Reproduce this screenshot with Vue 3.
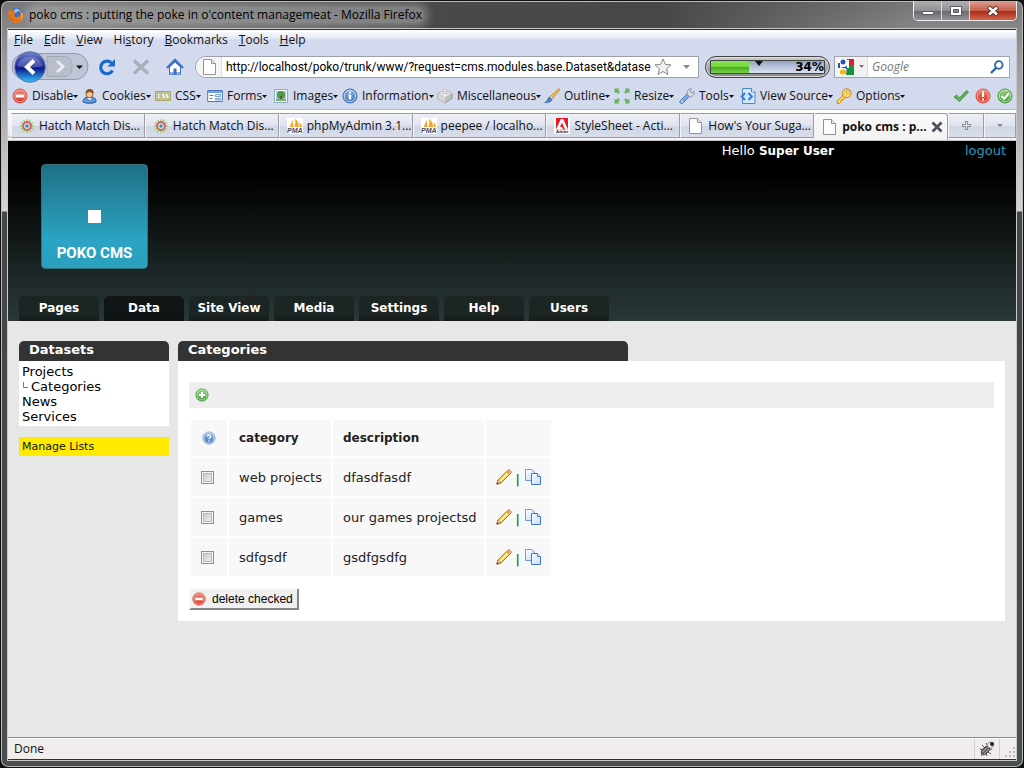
<script setup>
import { ref } from 'vue'

const menus = [['', 'F', 'ile'], ['', 'E', 'dit'], ['', 'V', 'iew'], ['Hi', 's', 'tory'], ['', 'B', 'ookmarks'], ['', 'T', 'ools'], ['', 'H', 'elp']]
const tools = [
  ['disable', 'Disable'], ['user', 'Cookies'], ['css', 'CSS'], ['form', 'Forms'], ['image', 'Images'], ['info', 'Information'],
  ['brick', 'Miscellaneous'], ['brush', 'Outline'], ['resize', 'Resize'], ['wrench', 'Tools'], ['source', 'View Source'], ['key', 'Options'],
]
const tabs = [
  ['flower', 'Hatch Match Dis...'], ['flower', 'Hatch Match Dis...'], ['pma', 'phpMyAdmin 3.1...'], ['pma', 'peepee / localho...'],
  ['adobe', 'StyleSheet - Acti...'], ['page', "How's Your Suga..."],
]
const sections = ['Pages', 'Data', 'Site View', 'Media', 'Settings', 'Help', 'Users']
const rows = ref([
  { category: 'web projects', description: 'dfasdfasdf', checked: false },
  { category: 'games', description: 'our games projectsd', checked: false },
  { category: 'sdfgsdf', description: 'gsdfgsdfg', checked: false },
])
const url = ref('http://localhost/poko/trunk/www/?request=cms.modules.base.Dataset&datase')
const query = ref('')
const petals = Array.from({ length: 12 }, (_, i) => i * 30)
</script>

<template>
  <svg class="defs" aria-hidden="true">
    <defs>
      <linearGradient id="gRed" x1="0" y1="0" x2="0" y2="1"><stop offset="0" stop-color="#f58a7b" /><stop offset="1" stop-color="#d9301f" /></linearGradient>
      <linearGradient id="gGreen" x1="0" y1="0" x2="0" y2="1"><stop offset="0" stop-color="#9bd38a" /><stop offset="1" stop-color="#3c9a35" /></linearGradient>
      <linearGradient id="gBlue" x1="0" y1="0" x2="0" y2="1"><stop offset="0" stop-color="#8db4e2" /><stop offset="1" stop-color="#3f74b8" /></linearGradient>
      <linearGradient id="gPaper" x1="0" y1="0" x2="1" y2="1"><stop offset="0" stop-color="#fff" /><stop offset="1" stop-color="#c3dcf8" /></linearGradient>
      <linearGradient id="gBack" x1="0" y1="0" x2="0" y2="1"><stop offset="0" stop-color="#7784c8" /><stop offset=".45" stop-color="#1d2d9d" /><stop offset=".55" stop-color="#0b1c8c" /><stop offset="1" stop-color="#35c5fb" /></linearGradient>
    </defs>
    <symbol id="i-firefox" viewBox="0 0 16 16"><circle cx="8.400" cy="7.600" r="6.900" fill="#3b6fc0" /><path d="M7 2c3-1 5 1 6 3l-3-1-2 2-2-1z" fill="#8cc8f0" /><path d="M1 2.500 3 4c1-1 2-1.500 3.500-1.600L5.500 4.500 8 6 6 7.500C6 10 9 11 11 9.500c2-1.500 1.800-4 .8-6C16 6 16.500 11 13 14c-4 3.500-11 2-12.500-3.500C0 7 .3 5 1 2.500z" fill="#e8741a" /><path d="M12.500 4C16 7 15 11.500 12 13.500c2-3 2.200-6 .5-9.500z" fill="#fbc13a" /><path d="M1 6c0 4 2 6.500 5 7.500C3 13.500.5 10 1 6z" fill="#a92f12" /></symbol>
    <symbol id="i-disable" viewBox="0 0 16 16"><circle cx="8" cy="8" r="7" fill="url(#gRed)" stroke="#d7544a" /><circle cx="8" cy="8" r="5.700" fill="none" stroke="#fbb4aa" stroke-width=".8" /><rect x="3.800" y="6.500" width="8.400" height="3" rx=".6" fill="#fff" /></symbol>
    <symbol id="i-user" viewBox="0 0 16 16"><path d="M1 14c0-4 3-5 7-5s6 1 6 5c-3 1.800-10 1.800-13 0z" fill="#5d96d8" stroke="#2c5e9e" /><path d="M5.500 10h4L8 12.500z" fill="#fff" /><ellipse cx="7.500" cy="5.800" rx="3.500" ry="4" fill="#f5c594" stroke="#9b6334" /><path d="M3.600 5.500C3 0 12.500-1 11.500 5.500 9.500 5 8 4 7.500 3.500 6.500 4.500 5 5 3.600 5.500z" fill="#8b4e20" /></symbol>
    <symbol id="i-css" viewBox="0 0 16 16"><path d="M.5 3.500h15v9H.5z" fill="#b9b984" stroke="#a5a56b" /><path d="M1.500 4.500h13v7h-13z" fill="none" stroke="#c9c99a" /><path d="M5.500 6.500H3.500v3h2M9.500 6.500h-2V8h2v1.500h-2M13 6.500h-2V8h2v1.500h-2" fill="none" stroke="#fff" /></symbol>
    <symbol id="i-form" viewBox="0 0 16 16"><path d="M.7 2.500h14.600v11H.7z" fill="#fff" stroke="#4c79ba" /><path d="M1 3h14v2H1z" fill="#6da0dd" /><path d="M2.500 7.500h4M2.500 10.500h3" stroke="#777" /><path d="M8.500 6.500h5v2h-5zM8.500 10.500h5v1.500h-5z" fill="#dfedfc" stroke="#79a5d8" /></symbol>
    <symbol id="i-image" viewBox="0 0 16 16"><path d="M1.500 1.500h13v13h-13z" fill="#fff" stroke="#8fa9bc" /><path d="M3 3h10v10H3z" fill="#a9cdeb" /><circle cx="8" cy="7" r="4" fill="#4a9c3e" /><path d="M7 8h2v4H7z" fill="#745338" /><path d="M3 11h10v2H3z" fill="#6fb45f" /></symbol>
    <symbol id="i-info" viewBox="0 0 16 16"><circle cx="8" cy="8" r="7" fill="url(#gBlue)" stroke="#376ca9" /><circle cx="8" cy="8" r="5.800" fill="none" stroke="#d5e5f7" stroke-width=".8" /><path d="M7 3.500h2v2H7zM6.500 6.500h2.700v5H6.800v-3h-.3z" fill="#fff" /></symbol>
    <symbol id="i-brick" viewBox="0 0 16 16"><path d="M.8 5.500 8 2l7.200 3.500v5L8 15 .8 11z" fill="#bcbcbc" stroke="#888" stroke-width=".7" /><path d="M.8 5.500 8 9l7.200-3.500L8 2z" fill="#ededed" /><path d="M.8 5.500 8 9v6L.8 11z" fill="#d5d5d5" /><g fill="#f4f4f4" stroke="#b0b0b0" stroke-width=".6"><path d="M6 2.500v2c1 1 3 1 4 0v-2" /><ellipse cx="8" cy="2.500" rx="2" ry="1" /><path d="M2.500 4.500v2c1 1 3 1 4 0v-2" /><ellipse cx="4.500" cy="4.500" rx="2" ry="1" /><path d="M9.500 4.500v2c1 1 3 1 4 0v-2" /><ellipse cx="11.500" cy="4.500" rx="2" ry="1" /></g></symbol>
    <symbol id="i-brush" viewBox="0 0 16 16"><path d="M7 8 14.500.8c1-.3 1.400.5 1 1.300L9 10z" fill="#f3bb4b" stroke="#b78023" stroke-width=".8" /><path d="m5.500 9 1.700-1.500L9.500 10 8 11.500z" fill="#ddd" stroke="#888" stroke-width=".6" /><path d="M.5 14.500C4 14 3 10 5.500 9L8 11.500c-1 3-5 3.500-7.500 3z" fill="#4c83c8" stroke="#315f9c" stroke-width=".6" /></symbol>
    <symbol id="i-resize" viewBox="0 0 16 16"><path d="M.5.500h5L4 2l2 2-2 2-2-2L.5 5.500zM15.500.500v5L14 4l-2 2-2-2 2-2L10.500.500zM.5 15.500v-5L2 12l2-2 2 2-2 2 1.500 1.500zM15.500 15.500h-5L12 14l-2-2 2-2 2 2 1.500-1.500z" fill="#63b35c" /></symbol>
    <symbol id="i-wrench" viewBox="0 0 16 16"><path d="m1 13 7-7 2.500 2.500-7 7c-1.500.7-3.500-1-2.500-2.500z" fill="#79a9e0" stroke="#3e70ae" stroke-width=".8" /><path d="M8 6C7.500 3 9.500.5 12.500.800L10.800 3l1.700 2L15 3.500c1 3-1.500 5.500-4.500 5z" fill="#d7dce3" stroke="#808994" stroke-width=".8" /><circle cx="3" cy="13.500" r=".9" fill="#e4effa" /></symbol>
    <symbol id="i-source" viewBox="0 0 16 16"><path d="M2.500.500h9l3.500 3.500v11.500H2.500z" fill="#d7e8fb" stroke="#4c86cb" /><path d="M11.500.500V4H15" fill="#fff" stroke="#4c86cb" /><path d="M5 5 1.800 8.500 5 12M8.500 5l3.200 3.500L8.500 12" fill="none" stroke="#3c82d4" stroke-width="2.200" /></symbol>
    <symbol id="i-key" viewBox="0 0 16 16"><path d="M1 13 7 7l2.500 2.500-1.300 1.300-1.400.2-.3 1.500-1.600.3-.3 1.600L3.500 15.500H1z" fill="#fbd353" stroke="#c07a22" stroke-width=".8" /><circle cx="10.800" cy="5.200" r="4.500" fill="#fbd65f" stroke="#c07a22" stroke-width=".8" /><circle cx="12" cy="4" r="1.500" fill="#fff" stroke="#c07a22" stroke-width=".7" /></symbol>
    <symbol id="i-tick" viewBox="0 0 16 16"><path d="M1 9 3.500 7l3 3 7-7.500L15.500 4 6.500 13.500z" fill="#60b454" stroke="#39843a" stroke-width=".8" /></symbol>
    <symbol id="i-alert" viewBox="0 0 16 16"><circle cx="8" cy="8" r="7" fill="url(#gRed)" stroke="#d7544a" /><circle cx="8" cy="8" r="5.700" fill="none" stroke="#fbb4aa" stroke-width=".8" /><path d="M7 3.500h2V9H7zM7 10.500h2v2H7z" fill="#fff" /></symbol>
    <symbol id="i-ok" viewBox="0 0 16 16"><circle cx="8" cy="8" r="7" fill="url(#gGreen)" stroke="#4c9b49" /><circle cx="8" cy="8" r="5.700" fill="none" stroke="#cdebc5" stroke-width=".8" /><path d="m4.500 8 2.700 2.700 4.500-5" fill="none" stroke="#fff" stroke-width="2" /></symbol>
    <symbol id="i-add" viewBox="0 0 16 16"><circle cx="8" cy="8" r="7" fill="url(#gGreen)" stroke="#4c9b49" /><circle cx="8" cy="8" r="5.700" fill="none" stroke="#cdebc5" stroke-width=".8" /><path d="M8 4.500v7M4.500 8h7" stroke="#fff" stroke-width="2.400" /></symbol>
    <symbol id="i-help" viewBox="0 0 16 16"><circle cx="8" cy="8" r="7" fill="url(#gBlue)" stroke="#8fafd8" /><circle cx="8" cy="8" r="5.900" fill="none" stroke="#d9e6f7" stroke-width="1" /><path d="M6 6.300c0-2.400 4-2.400 4 0C10 7.600 8 7.800 8 9.300M8 10.500v1.500" fill="none" stroke="#fff" stroke-width="1.600" /></symbol>
    <symbol id="i-pencil" viewBox="0 0 16 16"><path d="M.8 15.200 2 11 11.500 1.500c1.500-1.500 4.500 1 3 3L5 14z" fill="#f9d04a" stroke="#a96b1e" stroke-width=".9" /><path d="M3.800 12.200 12.500 3.500" stroke="#fff3b4" stroke-width="1.300" /><path d="m10.500 2.500 3 3 1-1c1.500-2-1.500-4.500-3-3z" fill="#f3ba7e" stroke="#b56d27" stroke-width=".7" /><path d="M2 11 5 14 .8 15.200z" fill="#edc290" stroke="#99662d" stroke-width=".6" /><path d="m.8 15.200.6-2 1.500 1.500z" fill="#443322" /></symbol>
    <symbol id="i-copy" viewBox="0 0 16 16"><path d="M.5.500h6.500l2.500 2.500v8.500h-9z" fill="url(#gPaper)" stroke="#6b9be0" /><path d="M6.500 4.500h6l3 3v8h-9z" fill="url(#gPaper)" stroke="#4678c9" /><path d="M12.500 4.500v3h3" fill="#eef6ff" stroke="#4678c9" /></symbol>
    <symbol id="i-page" viewBox="0 0 16 16"><path d="M1.500.500h8l4 4v11h-12z" fill="#fdfdfd" stroke="#949494" /><path d="M9.500.500v4h4" fill="#e9e9e9" stroke="#949494" /></symbol>
    <symbol id="i-flower" viewBox="0 0 16 16"><path v-for="a in petals" :key="a" d="M6.500 5 8 .3l1.500 4.700z" :transform="`rotate(${a} 8 8)`" fill="#8cc63f" /><circle cx="8" cy="8" r="3.800" fill="#cfe6ee" stroke="#e0566c" stroke-width="1.800" /><circle cx="8" cy="8" r="1.700" fill="#3f8fa8" /></symbol>
    <symbol id="i-pma" viewBox="0 0 16 16"><path d="M0 0h16v16H0z" fill="#fff" /><path d="M2.500 9C4 6.500 5 4 5.500 1.500L6.500 9zM7.500 9C8.500 6 8.500 3 8 .8c3 2 4 5 4 8.200zM12.700 9c.3-2 0-3.500-.5-5 1.800 1.500 2.500 3 2.800 5z" fill="#f5a12a" /><text x="0" y="15" font-family="Liberation Sans, sans-serif" font-size="7" font-weight="bold" font-style="italic" fill="#44486b">PMA</text></symbol>
    <symbol id="i-adobe" viewBox="0 0 16 16"><path d="M0 0h16v16H0z" fill="#fff" /><path d="M2 0h12v11.500H2z" fill="#e51b23" /><path d="M2 11.500 6.800 1h2.500L14 11.500h-3L8 4.500 6 9h2l1 2.500z" fill="#fff" /><text x="2" y="15" font-family="Liberation Sans, sans-serif" font-size="4" font-weight="bold" fill="#222">Adobe</text></symbol>
    <symbol id="i-bug" viewBox="0 0 18 18"><g stroke="#555" fill="none"><path d="M4 5l3 3M2 9l4 1M3 16l3-3M8 3l2 4M14 9l-4 1M13 14l-3-2M9 16l-1-3" /></g><ellipse cx="7.500" cy="10.500" rx="2.800" ry="5" transform="rotate(45 7.500 10.500)" fill="#666" stroke="#444" /><path d="m4 12 5-4M6 14l5-5" stroke="#aaa" /><circle cx="12.500" cy="5" r="3" fill="#eee" stroke="#999" /><circle cx="14" cy="4" r="2" fill="#222" /></symbol>
  </svg>

  <div class="window">
    <header class="titlebar">
      <svg class="i16"><use href="#i-firefox" /></svg>
      <span class="title">poko cms : putting the poke in o'content managemeat - Mozilla Firefox</span>
      <div class="controls">
        <button aria-label="Minimize"><svg width="14" height="12"><path d="M1.500 6.500h11v3h-11z" fill="#fff" stroke="#555b66" /></svg></button>
        <button aria-label="Maximize"><svg width="14" height="12"><path d="M1.500 1.500h11v9h-11z" fill="#fff" stroke="#555b66" /><path d="M4.500 4.500h5v3h-5z" fill="#889" stroke="#555b66" /></svg></button>
        <button class="close" aria-label="Close"><svg width="14" height="12"><path d="m2.500 2 9 8M11.500 2l-9 8" stroke="#5a3434" stroke-width="4.400" /><path d="m3 2.500 8 7M11 2.500l-8 7" stroke="#fff" stroke-width="2.400" /></svg></button>
      </div>
    </header>

    <div class="client">
      <nav class="menubar">
        <button v-for="m in menus" :key="m[2]">{{ m[0] }}<u>{{ m[1] }}</u>{{ m[2] }}</button>
      </nav>

      <div class="navbar">
        <svg class="backfwd" width="80" height="32" viewBox="0 0 80 32" role="img" aria-label="Back and forward">
          <rect x="1" y="2.500" width="76" height="26" rx="13" fill="#bfc5d6" stroke="#9299a9" />
          <path d="M36 5.500h17c6 0 8 4 8 10s-2 10-8 10H36z" fill="#b9bfca" stroke="#a3a9b6" />
          <path d="m46 10 6 5.500-6 5.500" fill="none" stroke="#e9ebf0" stroke-width="3" />
          <circle cx="19" cy="16" r="15.300" fill="url(#gBack)" stroke="#5f6c9f" />
          <path d="M6 15a13.500 12.500 0 0 1 26 0c-8 2-18 2-26 0z" fill="#fff" opacity=".2" />
          <path d="m23 9.500-7 6.500 7 6.500" fill="none" stroke="#fff" stroke-width="4" />
          <path d="M65 14.500h7L68.500 18z" fill="#111" />
        </svg>
        <button class="nb" aria-label="Reload"><svg width="18" height="18" viewBox="0 0 18 18"><path d="M14.500 12.500A6.300 6.300 0 1 1 13.500 5" fill="none" stroke="#1b68cf" stroke-width="3.200" /><path d="M17 1v7.500H9.500z" fill="#1b68cf" /></svg></button>
        <button class="nb" aria-label="Stop"><svg width="18" height="18" viewBox="0 0 18 18"><path d="m2 2.500 14 13M16 2.500l-14 13" stroke="#a9aeb9" stroke-width="3.400" /></svg></button>
        <button class="nb" aria-label="Home"><svg width="18" height="18" viewBox="0 0 18 18"><path d="M3.500 9v7.500h11V9L9 4z" fill="#fff" stroke="#4370b7" /><path d="M1 10 9 2l8 8" fill="none" stroke="#3973c9" stroke-width="2.400" /><path d="M4 14h10v2.500H4z" fill="#8ab2e6" /><path d="M7.500 10.500h3v6h-3z" fill="#3b6cb5" /></svg></button>
        <div class="urlbox">
          <span class="favicon"><svg class="i16"><use href="#i-page" /></svg></span>
          <input v-model="url" aria-label="Address" />
          <svg width="18" height="18" viewBox="0 0 18 18"><path d="m9 1 2.300 5.300 5.700.6-4.300 3.800 1.300 5.800-5-3-5 3 1.300-5.800L1 6.900l5.700-.6z" fill="#f1f1f1" stroke="#888" /></svg>
          <span class="drop"><svg width="7" height="4"><path d="M0 0h7L3.500 4z" fill="#888" /></svg></span>
        </div>
        <div class="meter"><div class="track"><i class="fill"></i><svg class="mark" width="8" height="5"><path d="M0 0h8L4 5z" fill="#111" /></svg><b>34%</b></div></div>
        <div class="search">
          <span class="engine"><svg class="i16" viewBox="0 0 16 16"><path d="M0 0h16v16H0z" fill="#fff" /><path d="M9 0h7v6H9z" fill="#dd1f26" /><path d="M9 6h7v10H8z" fill="#16933e" /><circle cx="5" cy="3" r="2.500" fill="#2455b8" /><path d="M0 4h2v5H0zM2 8c4 0 7 0 7-2v4z" fill="#2455b8" /><path d="M9 1h2v8H9z" fill="#fff" /><ellipse cx="5" cy="13" rx="3.500" ry="2.500" fill="#f4b522" /></svg><svg width="5" height="4"><path d="M0 0h5L2.500 3z" fill="#777" /></svg></span>
          <input v-model="query" placeholder="Google" aria-label="Search" />
          <svg width="14" height="14" viewBox="0 0 14 14"><circle cx="8.800" cy="5" r="3.800" fill="#fff" stroke="#2b62a8" stroke-width="1.800" /><path d="m6 8-5 5" stroke="#2b62a8" stroke-width="2.400" /></svg>
        </div>
      </div>

      <div class="devbar">
        <button v-for="t in tools" :key="t[0]"><svg class="i16"><use :href="`#i-${t[0]}`" /></svg>{{ t[1] }}<svg class="caret" width="5" height="3"><path d="M0 0h5L2.500 3z" fill="#111" /></svg></button>
        <span class="status-icons"><svg class="i16"><use href="#i-tick" /></svg><svg class="i16"><use href="#i-alert" /></svg><svg class="i16"><use href="#i-ok" /></svg></span>
      </div>

      <div class="tabstrip">
        <button v-for="(t, n) in tabs" :key="n" class="tab"><svg class="i16"><use :href="`#i-${t[0]}`" /></svg><span>{{ t[1] }}</span></button>
        <button class="tab active"><svg class="i16"><use href="#i-page" /></svg><span>poko cms : p...</span><svg class="x" width="12" height="12"><path d="m1.500 1.500 9 9M10.500 1.500l-9 9" stroke="#4a4f5c" stroke-width="2.600" /></svg></button>
        <button class="tab mini" aria-label="New tab"><svg width="9" height="9"><path d="M4.500 0v9M0 4.500h9" stroke="#8a8d95" stroke-width="3" /><path d="M4.500 1v7M1 4.500h7" stroke="#eee" /></svg></button>
        <button class="tab mini last" aria-label="List all tabs"><svg width="6" height="4"><path d="M0 0h6L3 3z" fill="#85888f" /></svg></button>
      </div>

      <div class="page">
        <div class="masthead">
          <div class="account"><span>Hello <b>Super User</b></span><a href="#logout">logout</a></div>
          <div class="logo"><i></i><span>POKO CMS</span></div>
          <nav class="sections"><a v-for="s in sections" :key="s" href="#" :class="{ current: s === 'Data' }">{{ s }}</a></nav>
        </div>
        <div class="columns">
          <aside>
            <h2>Datasets</h2>
            <ul>
              <li><a href="#">Projects</a></li>
              <li class="child"><svg width="8" height="10"><path d="M1.500 0v5.500H6" fill="none" stroke="#777" /></svg><a href="#">Categories</a></li>
              <li><a href="#">News</a></li>
              <li><a href="#">Services</a></li>
            </ul>
            <a class="manage" href="#">Manage Lists</a>
          </aside>
          <main>
            <h2>Categories</h2>
            <div class="panel">
              <div class="strip"><button aria-label="Add"><svg class="i14"><use href="#i-add" /></svg></button></div>
              <table>
                <thead><tr><th class="c-check"><svg class="i14"><use href="#i-help" /></svg></th><th class="c-cat">category</th><th class="c-desc">description</th><th class="c-act"></th></tr></thead>
                <tbody>
                  <tr v-for="r in rows" :key="r.category">
                    <td class="c-check"><input v-model="r.checked" type="checkbox" :aria-label="r.category" /></td>
                    <td>{{ r.category }}</td>
                    <td>{{ r.description }}</td>
                    <td class="c-act"><div><a href="#" aria-label="Edit"><svg class="i16"><use href="#i-pencil" /></svg></a><span>|</span><a href="#" aria-label="Duplicate"><svg class="i16"><use href="#i-copy" /></svg></a></div></td>
                  </tr>
                </tbody>
              </table>
              <button class="delete"><svg class="i14"><use href="#i-disable" /></svg>delete checked</button>
            </div>
          </main>
        </div>
      </div>

      <footer>
        <span class="done">Done</span>
        <span class="cell"><svg width="18" height="18"><use href="#i-bug" /></svg></span>
        <span class="grip"><svg width="10" height="10"><path d="M8 0h2v2H8zM4 4h2v2H4zM8 4h2v2H8zM0 8h2v2H0zM4 8h2v2H4zM8 8h2v2H8z" fill="#bcb8b6" /></svg></span>
      </footer>
    </div>
  </div>
</template>

<style>
body { background: #111; }
</style>

<style scoped>
* { box-sizing: border-box; }
.defs { position: absolute; width: 0; height: 0; }
svg { flex: none; display: block; }
symbol { overflow: visible; }
.i16 { width: 16px; height: 16px; }
.i14 { width: 14px; height: 14px; }
button { font: inherit; color: inherit; background: none; border: 0; padding: 0; margin: 0; }
input { font: inherit; margin: 0; }
a { color: inherit; text-decoration: none; }

.window {
  min-height: 100vh; display: flex; flex-direction: column; padding: 0 7px 7px; border-radius: 8px; overflow: hidden;
  border: 1px solid #111; box-shadow: inset 0 0 0 1px #b9bbbd;
  background: linear-gradient(90deg, transparent 20px, #48494a 430px, #484848 65%, transparent 90%) 0 0 / 100% 29px no-repeat,
    linear-gradient(#77777a 0, #9a9a9c 60px, #d8d4d8 210px, #444648 211px, #4b4f50 100%);
  font: 12px/16px "Open Sans", "Noto Sans", sans-serif; color: #111;
}
.titlebar { display: flex; align-items: center; height: 28px; flex: none; }
.title { margin-left: 5px; padding-right: 2px; white-space: nowrap; color: #000; background: rgba(180, 180, 180, .5); box-shadow: 0 0 8px 4px rgba(180, 180, 180, .5); border-radius: 8px; }
.controls { display: flex; margin: 0 -1px 0 auto; align-self: flex-start; height: 20px; border: 1px solid #eee; border-top: 0; border-radius: 0 0 5px 5px; overflow: hidden; background: #777; }
.controls button { width: 28px; display: flex; justify-content: center; align-items: center; background: linear-gradient(#b1b1b4, #909093 50%, #66666a 51%, #929298); border-right: 1px solid #ddd; }
.controls .close { width: 46px; border: 0; background: linear-gradient(#dda192, #c95f4d 50%, #a82814 51%, #ce6750); }

.client { flex: 1; display: flex; flex-direction: column; border: 1px solid #303030; border-width: 1px 0; outline: 1px solid #c9c9cb; background: #d3daed; }
.menubar { display: flex; align-items: flex-start; gap: 11px; padding: 2px 6px 0; height: 20px; background: linear-gradient(#fff, #e4e9f5 8px, #d3daed 10px); }
.navbar { display: flex; align-items: center; height: 33px; padding: 0 6px 0 3px; }
.backfwd { margin-right: 7px; }
.nb { margin-right: 16px; }
.urlbox { flex: 1; min-width: 0; display: flex; align-items: center; height: 22px; margin-left: -5px; background: #fff; border: 1px solid #9ba0ab; border-radius: 11px 0 0 11px; }
.urlbox input { flex: 1; min-width: 0; border: 0; padding: 0; background: none; outline: 0; font-family: Roboto, sans-serif; }
.favicon { width: 26px; height: 20px; padding: 2px 0 0 6px; margin-right: 4px; border-right: 1px solid #ddd; border-radius: 10px 0 0 10px; background: #f5f5f5; }
.drop { display: flex; width: 26px; padding-left: 3px; justify-content: center; }
.meter { width: 125px; height: 22px; margin: 0 4px 0 6px; padding: 3px 4px; border: 1px solid #444; border-radius: 11px; background: linear-gradient(#ccc, #888); box-shadow: inset 0 0 0 1px #ddd; }
.track { position: relative; height: 14px; border: 1px solid #444; background: linear-gradient(#93a5c4, #dbe2f2); text-align: right; font: bold 12px/12px "DejaVu Sans", sans-serif; color: #000; }
.fill { position: absolute; left: 0; top: 0; bottom: 0; width: 34%; background: linear-gradient(#85e650, #74d639 50%, #48ae18 51%, #78cf50); }
.mark { position: absolute; left: 44px; top: 0; }
.search { display: flex; align-items: center; width: 176px; height: 22px; background: #fff; border: 1px solid #a2a5ac; padding-right: 5px; }
.search input { flex: 1; min-width: 0; border: 0; padding: 0 0 0 4px; outline: 0; background: none; }
.search input::placeholder { color: #777; font-style: italic; opacity: 1; }
.engine { display: flex; align-items: center; gap: 5px; width: 33px; height: 20px; padding-left: 3px; background: #f2f2f4; border-right: 1px solid #ddd; }

.devbar { display: grid; grid-template-columns: 70px 73px 52px 66px 69px 95px 107px 70px 65px 61px 96px 80px 1fr; align-items: center; height: 27px; padding: 0 3px 0 4px; border-bottom: 1px solid #b4bacb; }
.devbar button { display: flex; align-items: center; gap: 4px; white-space: nowrap; }
.devbar .caret { margin-left: -4px; }
.status-icons { display: flex; justify-content: flex-end; gap: 6px; }

.tabstrip { display: flex; height: 31px; padding: 3px 0 0 3px; background: linear-gradient(#fff, #fafafb 3px, #ececf0 26px, #aeb0b5 27px, #f3f3f3 28px, #f3f3f3 30px, #999 31px); }
.tab { flex: 1 1 134px; min-width: 0; display: flex; align-items: center; gap: 4px; height: 25px; padding-left: 7px; border: 1px solid #9a9da6; border-left-color: #f5f5f5; background: linear-gradient(#eef0f6, #dfe3ee 50%, #cfd5e4 51%, #d9deeb); white-space: nowrap; overflow: hidden; }
.tab.active { height: 27px; font-weight: bold; background: linear-gradient(#fafafa, #f2f2f2); border-bottom: 0; border-radius: 3px 3px 0 0; }
.tab.active .x { margin-left: auto; margin-right: 9px; }
.tab.mini { flex: 0 0 36px; padding: 0; justify-content: center; }
.tab.mini.last { flex-basis: 32px; }

.page { flex: 1; background: #e7e7e7; font: 13px/15px "DejaVu Sans", sans-serif; color: #222; }
.masthead { display: flex; flex-direction: column; height: 180px; padding: 2px 10px 0 11px; background: linear-gradient(#000 20%, #2a3838); color: #fff; }
.account { display: flex; justify-content: flex-end; gap: 131px; line-height: 16px; }
.account b { font-size: 12px; }
.account a { color: #2b9cbc; }
.logo { width: 107px; height: 105px; margin: 5px 0 0 22px; padding-top: 45px; display: flex; flex-direction: column; align-items: center; gap: 20px; border-radius: 4px; border: 1px solid #35707d; background: linear-gradient(#1e7084, #2ba3c2 72%, #2ba0bf); }
.logo i { width: 13px; height: 13px; background: #fff; }
.logo span { font: bold 15px/20px Roboto, sans-serif; }
.sections { display: flex; gap: 5px; margin-top: auto; }
.sections a { width: 80px; height: 25px; text-align: center; font-size: 12px; font-weight: bold; line-height: 25px; border-radius: 5px 5px 0 0; white-space: nowrap; background: linear-gradient(#1d2424, #1c2424 70%, #151a1a); }
.sections a.current { background: linear-gradient(#121616, #0e1213); }
.columns { display: flex; gap: 9px; align-items: flex-start; padding: 20px 11px; }
aside { width: 150px; flex: none; }
main { flex: 1; }
h2 { margin: 0; height: 20px; padding: 1px 10px 0; font-size: 13px; line-height: 15px; color: #fff; background: #333; border-radius: 5px 5px 0 0; }
main h2 { width: 450px; max-width: 100%; }
ul { list-style: none; margin: 0 0 11px; padding: 3px 3px 2px; background: #fff; color: #000; }
.child { display: flex; align-items: center; gap: 1px; }
.manage { display: block; padding: 2px 3px; font-size: 11px; background: #ffea00; color: #111; }
.panel { padding: 21px 11px 11px; background: #fff; }
.strip { height: 26px; padding: 6px; background: #eee; margin-bottom: 10px; }
table { border-spacing: 2px; }
th, td { background: #f8f8f8; padding: 0 7px 0 10px; text-align: left; height: 38px; white-space: nowrap; }
th { height: 36px; font-size: 12px; }
.c-check { width: 36px; padding-right: 0; }
th.c-check { padding-left: 11px; }
.c-cat { width: 102px; }
.c-desc { width: 150px; }
.c-act { width: 65px; }
.c-act div { display: flex; align-items: center; gap: 4px; }
.c-act span { padding-top: 4px; width: 5px; color: #174012; }
input[type="checkbox"] { appearance: none; display: block; width: 13px; height: 13px; border: 1px solid #8e8f8f; background: linear-gradient(135deg, #bfc3c9, #f6f6f6); box-shadow: inset 0 0 0 1px #f4f4f4, inset 0 0 0 2px #b7babf; }
input[type="checkbox"]:checked { background: #468; }
.delete { display: flex; align-items: center; gap: 6px; margin-top: 10px; height: 22px; padding: 0 4px 0 1px; border: 2px solid; border-color: #f6f6f6 #858585 #858585 #f6f6f6; background: #f0f0f0; font: 12px/16px "Liberation Sans", Arial, sans-serif; color: #000; }

footer { display: flex; height: 22px; align-items: center; border-top: 1px solid #8b8b8b; background: #f0edec; box-shadow: inset 0 1px #fff; }
.done { flex: 1; padding-left: 6px; }
.cell { display: flex; align-items: center; padding: 0 3px; height: 20px; border: 1px solid #d2cfce; border-width: 0 1px; }
.grip { width: 16px; height: 20px; padding: 8px 0 0 5px; }
</style>
